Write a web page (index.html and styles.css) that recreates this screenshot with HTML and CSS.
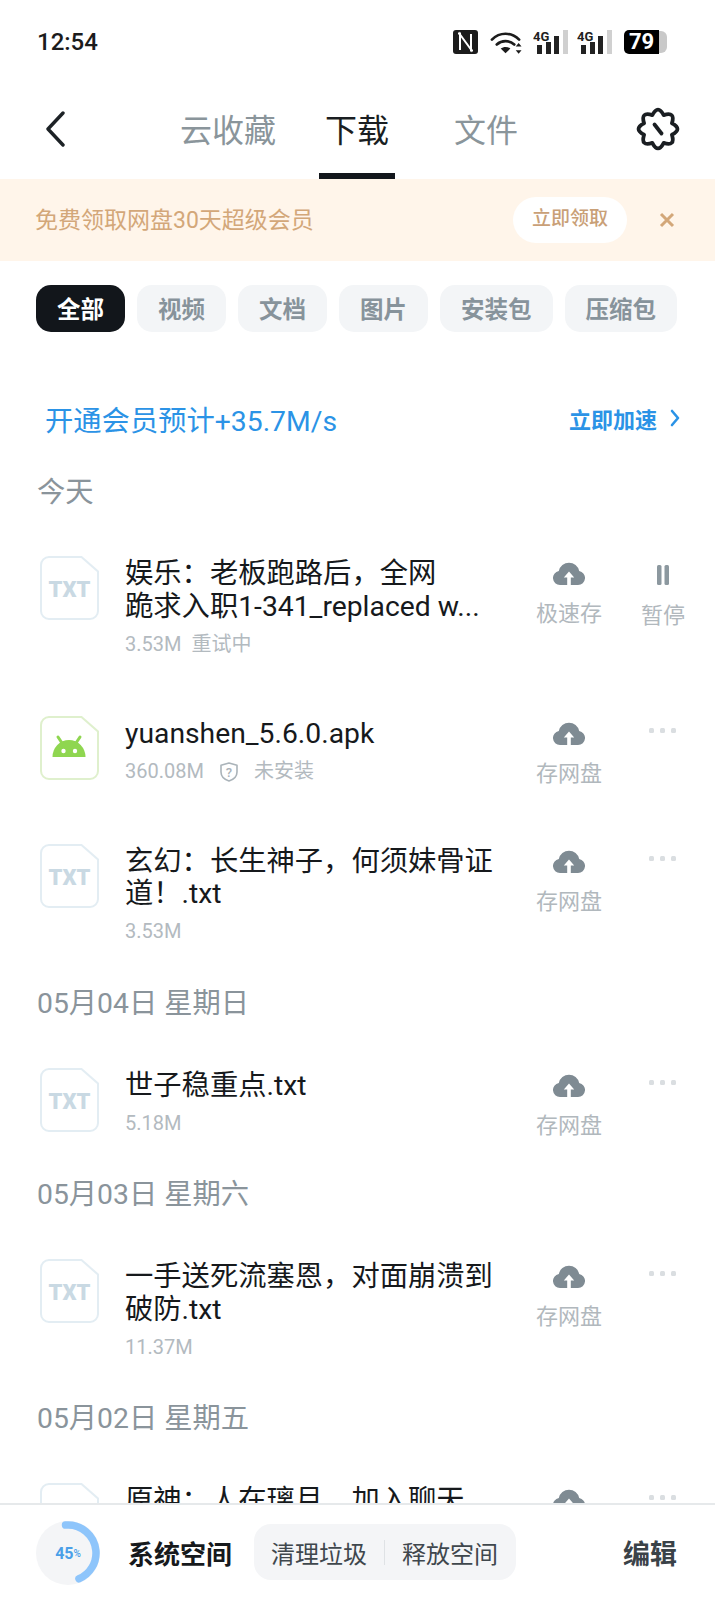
FILE: index.html
```html
<!DOCTYPE html>
<html lang="zh-CN">
<head>
<meta charset="utf-8">
<title>下载</title>
<link rel="stylesheet" href="styles.css">
</head>
<body>
<svg class="defs" width="0" height="0" aria-hidden="true">
  <symbol id="cloud" viewBox="0 0 32 24">
    <path fill="currentColor" d="M7 24a7 7 0 0 1-1.2-13.9A10.4 10.4 0 0 1 26.200 10.100A7 7 0 0 1 25 24z"/>
    <path fill="#fff" d="M16 10.500l-5.200 6h3.400V24h3.600v-7.500h3.400z"/>
  </symbol>
  <symbol id="file" viewBox="0 0 59 64">
    <path fill="#fff" stroke="currentColor" stroke-width="2" d="M9 1h32.500L58 15.500V55a8 8 0 0 1-8 8H9a8 8 0 0 1-8-8V9a8 8 0 0 1 8-8z"/>
  </symbol>
  <symbol id="dots" viewBox="0 0 28 6">
    <rect x="0" y="0" width="5" height="5" rx="1.500" fill="currentColor"/>
    <rect x="11" y="0" width="5" height="5" rx="1.500" fill="currentColor"/>
    <rect x="22" y="0" width="5" height="5" rx="1.500" fill="currentColor"/>
  </symbol>
  <symbol id="signal" viewBox="0 0 36 26">
    <text x="0" y="12" class="net">4G</text>
    <rect x="4" y="16" width="5" height="9" fill="#222"/>
    <rect x="13" y="13" width="5" height="12" fill="#222"/>
    <rect x="21" y="7" width="5" height="18" fill="#222"/>
    <rect x="30" y="1" width="5" height="24" fill="#d0d0d0"/>
  </symbol>
</svg>

<div class="page">
  <header class="status">
    <span class="time">12:54</span>
    <div class="status-icons">
      <svg class="nfc" width="25" height="24" viewBox="0 0 25 24">
        <rect width="25" height="24" rx="3" fill="#1c1c1c"/>
        <path fill="none" stroke="#fff" stroke-width="2" d="M7 20V4.500L18 19.500V4M5 3.500h3M17 20.500h3"/>
      </svg>
      <svg class="wifi" width="33" height="25" viewBox="0 0 34 25">
        <g fill="none" stroke="#1c1c1c" stroke-width="2.800" stroke-linecap="round">
          <path d="M2 9.500C10 1.500 22 1.500 30 9.500"/>
          <path d="M7 14.500C12 10 20 10 25 14.500"/>
        </g>
        <path fill="#1c1c1c" d="M16 23.500l-5-4.700c3-2.300 7-2.300 10 0z"/>
        <path fill="#1c1c1c" d="M29.500 13l3 3.500h-6zM29.500 24l-3-3.500h6z"/>
      </svg>
      <svg class="sig" width="36" height="26"><use href="#signal"/></svg>
      <svg class="sig" width="36" height="26"><use href="#signal"/></svg>
      <div class="battery"><span class="battery-fill">79</span><span class="battery-rest"></span></div>
    </div>
  </header>

  <nav class="nav">
    <svg class="back" width="20" height="36" viewBox="0 0 20 36">
      <path d="M18 2L3 18l15 16" fill="none" stroke="#1d2226" stroke-width="3.400" stroke-linecap="round" stroke-linejoin="round"/>
    </svg>
    <div class="tabs">
      <span class="tab">云收藏</span>
      <span class="tab tab-on">下载</span>
      <span class="tab tab-far">文件</span>
    </div>
    <svg class="gear" width="44" height="44" viewBox="0 0 44 44">
      <path fill="none" stroke="#1a1e22" stroke-width="3.800" stroke-linejoin="round" d="M16.300 8.100Q22-3 27.700 8.100Q39.700 4.300 35.900 16.300Q47 22 35.900 27.700Q39.700 39.700 27.700 35.900Q22 47 16.300 35.900Q4.300 39.700 8.100 27.700Q-3 22 8.100 16.300Q4.300 4.300 16.300 8.100z"/>
      <path d="M18.500 17.500L25.500 26.500" stroke="#1a1e22" stroke-width="3.800" stroke-linecap="round"/>
    </svg>
  </nav>

  <section class="promo">
    <span class="promo-text">免费领取网盘30天超级会员</span>
    <span class="promo-btn">立即领取</span>
    <svg class="promo-x" width="16" height="16" viewBox="0 0 16 16">
      <path d="M2 2l12 12M14 2L2 14" stroke="#d3a779" stroke-width="3"/>
    </svg>
  </section>

  <div class="chips">
    <span class="chip chip-on">全部</span>
    <span class="chip">视频</span>
    <span class="chip">文档</span>
    <span class="chip">图片</span>
    <span class="chip">安装包</span>
    <span class="chip">压缩包</span>
  </div>

  <main class="list">
    <div class="speed">
      <span class="speed-text">开通会员预计+35.7M/s</span>
      <span class="speed-go">立即加速</span>
      <svg class="speed-arrow" width="10" height="18" viewBox="0 0 10 18">
        <path d="M2 2l6 7-6 7" fill="none" stroke="#2b93e6" stroke-width="2.600" stroke-linecap="round" stroke-linejoin="round"/>
      </svg>
    </div>

    <h2 class="day day-first">今天</h2>

    <article class="row row-gap">
      <svg class="ficon f-txt" width="59" height="64" viewBox="0 0 59 64">
        <use href="#file" width="59" height="64"/><text x="29.500" y="41" text-anchor="middle" class="ftxt">TXT</text>
      </svg>
      <div class="info">
        <div class="title">娱乐：老板跑路后，全网<br>跪求入职1-341_replaced w...</div>
        <div class="meta"><span>3.53M</span><span>重试中</span></div>
      </div>
      <div class="act"><svg class="cloud" width="32" height="24"><use href="#cloud"/></svg><span>极速存</span></div>
      <div class="act2">
        <svg class="pause" width="14" height="20" viewBox="0 0 14 20">
          <rect x="1" y="0" width="4.500" height="20" rx="1.500" fill="#8c989f"/>
          <rect x="8.500" y="0" width="4.500" height="20" rx="1.500" fill="#8c989f"/>
        </svg>
        <span>暂停</span>
      </div>
    </article>

    <article class="row row-gap">
      <svg class="ficon f-apk" width="59" height="64" viewBox="0 0 59 64">
        <use href="#file" width="59" height="64"/>
        <path fill="#8fd650" d="M12.500 41a16.500 17 0 0 1 33 0z"/>
        <path d="M18 21l4 6M40 21l-4 6" stroke="#8fd650" stroke-width="3" stroke-linecap="round"/>
        <circle cx="23.500" cy="35" r="2.200" fill="#fff"/><circle cx="35" cy="35" r="2.200" fill="#fff"/>
      </svg>
      <div class="info">
        <div class="title">yuanshen_5.6.0.apk</div>
        <div class="meta">
          <span>360.08M</span>
          <svg class="shield" width="18" height="20" viewBox="0 0 18 20">
            <path d="M9 1l8 2.300V10c0 4.500-3.300 7.500-8 9-4.700-1.500-8-4.500-8-9V3.300z" fill="none" stroke="#aab3b9" stroke-width="1.600" stroke-linejoin="round"/>
            <text x="9" y="14.500" text-anchor="middle" class="qmark">?</text>
          </svg>
          <span>未安装</span>
        </div>
      </div>
      <div class="act"><svg class="cloud" width="32" height="24"><use href="#cloud"/></svg><span>存网盘</span></div>
      <div class="act2"><svg class="more" width="28" height="6"><use href="#dots"/></svg></div>
    </article>

    <article class="row">
      <svg class="ficon f-txt" width="59" height="64" viewBox="0 0 59 64">
        <use href="#file" width="59" height="64"/><text x="29.500" y="41" text-anchor="middle" class="ftxt">TXT</text>
      </svg>
      <div class="info">
        <div class="title">玄幻：长生神子，何须妹骨证<br>道！.txt</div>
        <div class="meta"><span>3.53M</span></div>
      </div>
      <div class="act"><svg class="cloud" width="32" height="24"><use href="#cloud"/></svg><span>存网盘</span></div>
      <div class="act2"><svg class="more" width="28" height="6"><use href="#dots"/></svg></div>
    </article>

    <h2 class="day">05月04日 星期日</h2>

    <article class="row">
      <svg class="ficon f-txt" width="59" height="64" viewBox="0 0 59 64">
        <use href="#file" width="59" height="64"/><text x="29.500" y="41" text-anchor="middle" class="ftxt">TXT</text>
      </svg>
      <div class="info">
        <div class="title">世子稳重点.txt</div>
        <div class="meta"><span>5.18M</span></div>
      </div>
      <div class="act"><svg class="cloud" width="32" height="24"><use href="#cloud"/></svg><span>存网盘</span></div>
      <div class="act2"><svg class="more" width="28" height="6"><use href="#dots"/></svg></div>
    </article>

    <h2 class="day">05月03日 星期六</h2>

    <article class="row">
      <svg class="ficon f-txt" width="59" height="64" viewBox="0 0 59 64">
        <use href="#file" width="59" height="64"/><text x="29.500" y="41" text-anchor="middle" class="ftxt">TXT</text>
      </svg>
      <div class="info">
        <div class="title">一手送死流塞恩，对面崩溃到<br>破防.txt</div>
        <div class="meta"><span>11.37M</span></div>
      </div>
      <div class="act"><svg class="cloud" width="32" height="24"><use href="#cloud"/></svg><span>存网盘</span></div>
      <div class="act2"><svg class="more" width="28" height="6"><use href="#dots"/></svg></div>
    </article>

    <h2 class="day">05月02日 星期五</h2>

    <article class="row">
      <svg class="ficon f-txt" width="59" height="64" viewBox="0 0 59 64">
        <use href="#file" width="59" height="64"/><text x="29.500" y="41" text-anchor="middle" class="ftxt">TXT</text>
      </svg>
      <div class="info">
        <div class="title">原神：人在璃月，加入聊天</div>
      </div>
      <div class="act"><svg class="cloud" width="32" height="24"><use href="#cloud"/></svg><span>存网盘</span></div>
      <div class="act2"><svg class="more" width="28" height="6"><use href="#dots"/></svg></div>
    </article>
  </main>

  <footer class="bar">
    <div class="ring">
      <svg width="64" height="64" viewBox="0 0 64 64">
        <circle cx="32" cy="32" r="32" fill="#f4f5f7"/>
        <circle cx="32" cy="32" r="28" fill="none" stroke="#8ec5fb" stroke-width="7.500" stroke-linecap="round" stroke-dasharray="79 176" transform="rotate(-95 32 32)"/>
      </svg>
      <span class="ring-label">45<small>%</small></span>
    </div>
    <strong class="sys">系统空间</strong>
    <div class="tools">
      <span>清理垃圾</span>
      <i class="tools-sep"></i>
      <span>释放空间</span>
    </div>
    <strong class="edit">编辑</strong>
  </footer>
</div>
</body>
</html>
```

FILE: styles.css
```css
* { box-sizing: border-box; }
html, body { margin: 0; padding: 0; background: #fff; }
body { font-family: Roboto, "Noto Sans CJK SC", sans-serif; color: #1a1e22; }
.defs { position: absolute; }
.page { width: 715px; height: 1599px; display: flex; flex-direction: column; overflow: hidden; }

/* status bar */
.status { height: 84px; flex: none; display: flex; align-items: center; justify-content: space-between; padding: 0 47px 0 37px; }
.time { font-size: 24px; font-weight: 500; color: #1c1c1c; }
.status-icons { display: flex; align-items: center; }
.wifi { margin-left: 12px; }
.sig { margin-left: 10px; }
.sig + .sig { margin-left: 8px; }
.net { font: 700 13px Roboto, sans-serif; fill: #222; }
.battery { margin-left: 11px; width: 44px; height: 24px; display: flex; align-items: stretch; }
.battery-fill { width: 35px; background: #000; color: #fff; font-size: 22px; font-weight: 700; line-height: 24px; text-align: center; border-radius: 5px 0 0 5px; }
.battery-rest { width: 8px; background: #c9c9c9; border-radius: 0 6px 6px 0; margin: 1px 0; }

/* nav */
.nav { height: 95px; flex: none; display: flex; align-items: flex-start; position: relative; padding-left: 45px; }
.back { margin-top: 27px; flex: none; }
.tabs { display: flex; margin-left: 109px; gap: 37px; }
.tab { font-size: 32px; line-height: 48px; padding: 23px 6px 0; height: 95px; color: #8a959b; position: relative; }
.tab-on { color: #1a1e22; }
.tab-on::after { content: ""; position: absolute; left: 0; right: 0; bottom: 0; height: 6px; background: #13171c; }
.tab-far { margin-left: 16px; }
.gear { margin-left: 112px; margin-top: 23px; flex: none; }

/* promo */
.promo { height: 82px; flex: none; background: #fff5ea; display: flex; align-items: center; padding-left: 35px; }
.promo-text { font-size: 23px; line-height: 30px; padding-top: 2px; color: #d3a779; width: 478px; }
.promo-btn { width: 114px; height: 46px; border-radius: 23px; background: #fff; color: #c9a077; font-size: 19px; font-weight: 500; line-height: 44px; text-align: center; }
.promo-x { margin-left: 32px; }

/* chips */
.chips { flex: none; display: flex; gap: 12px; padding: 24px 0 0 36px; }
.chip { height: 47px; line-height: 50px; padding: 0 21px; border-radius: 15px; background: #f3f5f7; color: #87939b; font-size: 23.500px; font-weight: 700; }
.chip-on { background: #12161b; color: #fff; }

/* list */
.list { flex: 1; min-height: 0; overflow: hidden; }
.speed { margin-top: 63px; height: 46px; display: flex; align-items: center; padding: 0 35px 0 45px; color: #2b93e6; }
.speed-text { font-size: 28.300px; flex: 1; }
.speed-go { font-size: 22px; font-weight: 700; }
.speed-arrow { margin-left: 13px; }
.day { margin: 0 0 44px; padding-left: 37px; height: 40px; font-size: 28.300px; line-height: 40px; font-weight: 400; color: #8a949b; }
.day-first { margin-top: 32px; margin-bottom: 43px; }

.row { display: flex; align-items: flex-start; padding: 0 0 41px 40px; }
.row-gap { padding-bottom: 61px; }
.ficon { flex: none; }
.f-txt { color: #e3edf3; }
.f-apk { color: #dff0cd; }
.ftxt { font: 900 22px Roboto, sans-serif; fill: #c9d9e3; }
.qmark { font: 500 13px Roboto, sans-serif; fill: #aab3b9; }
.info { width: 372px; margin-left: 26px; padding-top: 2px; flex: none; }
.title { font-size: 28.300px; line-height: 32.500px; color: #16191c; }
.meta { margin-top: 10px; height: 22px; display: flex; align-items: center; gap: 10px; font-size: 20px; line-height: 25px; color: #b3babf; }
.shield { margin: 0 6px; }
.act { width: 68px; margin-left: 38px; margin-bottom: -8px; flex: none; padding-top: 5px; display: flex; flex-direction: column; align-items: center; }
.cloud { color: #7f8b93; display: block; }
.act span { margin-top: 14px; font-size: 22px; line-height: 30px; color: #b1b8bd; white-space: nowrap; }
.act2 { width: 50px; margin-left: 35px; flex: none; padding-top: 9px; display: flex; flex-direction: column; align-items: center; }
.act2 span { margin-top: 16px; font-size: 22px; line-height: 30px; color: #b1b8bd; }
.pause { display: block; }
.more { color: #dadee1; margin-top: 3px; display: block; }

/* bottom bar */
.bar { height: 96px; flex: none; background: #fff; border-top: 2px solid #e6e9eb; display: flex; align-items: center; padding-left: 36px; }
.ring { width: 64px; height: 64px; position: relative; flex: none; margin-top: 2px; }
.ring svg { display: block; }
.ring-label { position: absolute; inset: 0; display: flex; align-items: center; justify-content: center; color: #4a9fe8; font-size: 16px; font-weight: 700; }
.ring-label small { font-size: 10px; font-weight: 500; }
.sys { margin-left: 28px; font-size: 26px; font-weight: 700; color: #16191c; }
.tools { margin-left: 22px; width: 262px; height: 56px; border-radius: 17px; background: #f4f5f7; display: flex; align-items: center; padding-left: 17px; font-size: 24px; color: #3f474d; }
.tools-sep { width: 1px; height: 25px; background: #dfe2e5; margin: 0 17px; }
.edit { margin-left: 107px; font-size: 27px; font-weight: 700; color: #3a4248; }
```
